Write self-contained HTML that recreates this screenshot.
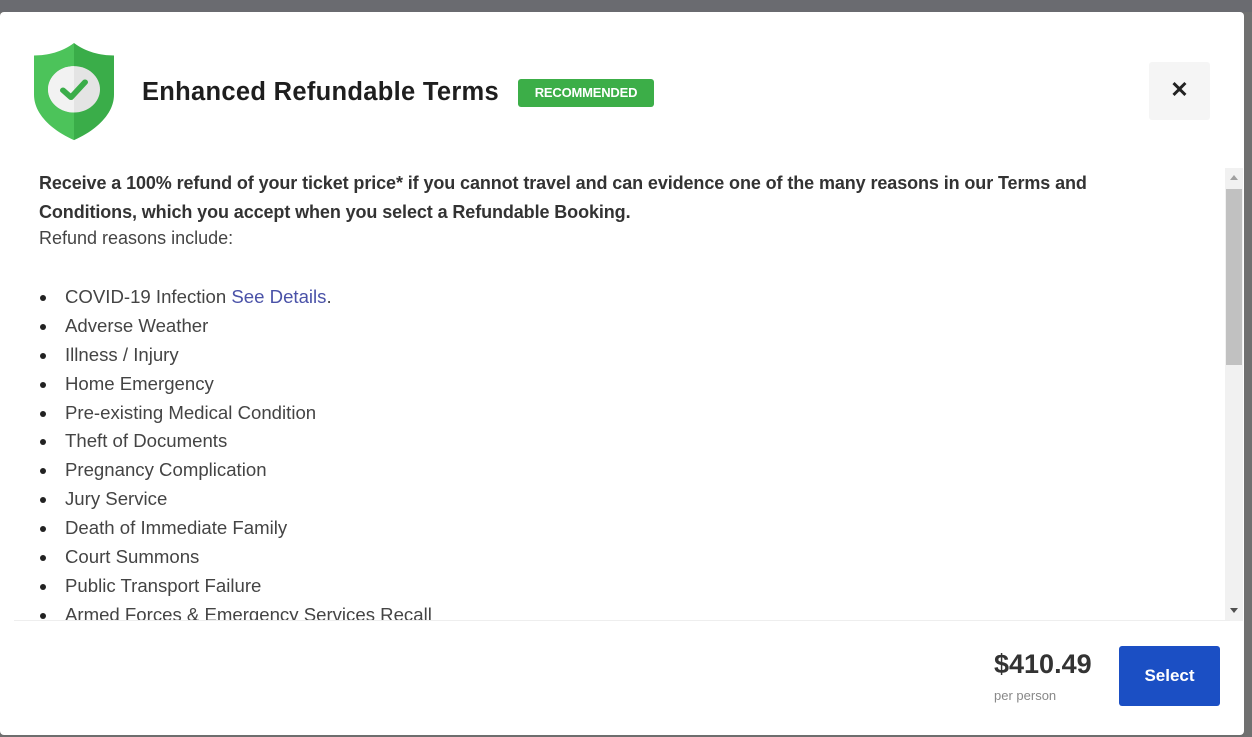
<!DOCTYPE html>
<html><head><meta charset="utf-8"><style>
*{margin:0;padding:0;box-sizing:border-box}
body{width:1252px;height:737px;background:#6e6e6e;font-family:"Liberation Sans",sans-serif;position:relative;overflow:hidden}
.topbar{position:absolute;left:0;top:0;width:1252px;height:12px;background:#6a6b70}
.modal{position:absolute;left:0;top:12px;width:1244px;height:723px;background:#fff;border-radius:4px;overflow:hidden}
.title{position:absolute;left:142px;top:66px;font-size:25.5px;font-weight:bold;color:#1e1e1e;letter-spacing:0.3px}
.badge{position:absolute;left:518px;top:67px;width:136px;height:28px;background:#3cae48;border-radius:3px;color:#fff;font-size:13px;font-weight:bold;line-height:28px;text-align:center;letter-spacing:-0.2px}
.close{position:absolute;left:1149px;top:50px;width:61px;height:58px;background:#f5f5f5;border-radius:3px;text-align:center;line-height:56px;font-size:22px;font-weight:bold;color:#222}
.content{position:absolute;left:0;top:156px;width:1224px;height:453px;overflow:hidden}
.p1{position:absolute;left:39px;top:1px;font-size:18px;font-weight:bold;color:#333;line-height:29px;width:1110px;letter-spacing:-0.1px}
.p2{position:absolute;left:39px;top:60px;font-size:18px;color:#444}
ul{position:absolute;left:39px;top:115px;list-style:none}
li{font-size:18.6px;color:#444;height:28.9px;line-height:28.9px;position:relative;padding-left:26px}
li:before{content:"";position:absolute;left:1px;top:12px;width:6px;height:6px;border-radius:50%;background:#222}
a{color:#4a52a8;text-decoration:none}
.sb{position:absolute;left:1225px;top:156px;width:18px;height:453px;background:#f1f1f1}
.thumb{position:absolute;left:1226px;top:177px;width:16px;height:176px;background:#c1c1c1}
.div{position:absolute;left:14px;top:608px;width:1216px;height:1px;background:#eee}
.price{position:absolute;left:994px;top:637px;font-size:27px;font-weight:bold;color:#333}
.pp{position:absolute;left:994px;top:676px;font-size:13px;color:#888}
.btn{position:absolute;left:1119px;top:634px;width:101px;height:60px;background:#1b4fc4;border-radius:3px;color:#fff;font-weight:bold;font-size:17px;text-align:center;line-height:60px}
.right{position:absolute;left:1244px;top:12px;width:8px;height:725px;background:#707070}
</style></head><body>
<div class="topbar"></div>
<div class="right"></div>
<div class="modal">
<svg style="position:absolute;left:32px;top:31px" width="84" height="98" viewBox="0 0 84 110" preserveAspectRatio="none">
<path d="M42 0 C30 10 16 14 2 14 L2 58 C2 80 20 98 42 109 Z" fill="#4cc35a"/>
<path d="M42 0 C54 10 68 14 82 14 L82 58 C82 80 64 98 42 109 Z" fill="#3aad49"/>
<circle cx="42" cy="52" r="26" fill="#e4e4e4"/>
<path d="M42 26 A26 26 0 0 0 42 78 Z" fill="#f2f2f2"/>
<path d="M31 53 L39 61 L53 44" stroke="#3aad49" stroke-width="6" fill="none" stroke-linecap="round" stroke-linejoin="round"/>
</svg>
<div class="title">Enhanced Refundable Terms</div>
<div class="badge">RECOMMENDED</div>
<div class="close">✕</div>
<div class="content">
<div class="p1">Receive a 100% refund of your ticket price* if you cannot travel and can evidence one of the many reasons in our Terms and Conditions, which you accept when you select a Refundable Booking.</div>
<div class="p2">Refund reasons include:</div>
<ul>
<li>COVID-19 Infection <a>See Details</a>.</li>
<li>Adverse Weather</li>
<li>Illness / Injury</li>
<li>Home Emergency</li>
<li>Pre-existing Medical Condition</li>
<li>Theft of Documents</li>
<li>Pregnancy Complication</li>
<li>Jury Service</li>
<li>Death of Immediate Family</li>
<li>Court Summons</li>
<li>Public Transport Failure</li>
<li>Armed Forces &amp; Emergency Services Recall</li>
</ul>
</div>
<div class="sb"></div><div class="thumb"></div>
<svg style="position:absolute;left:1229px;top:162px" width="10" height="8"><path d="M1 6 L5 1 L9 6Z" fill="#a0a0a0"/></svg>
<svg style="position:absolute;left:1229px;top:594px" width="10" height="8"><path d="M1 2 L5 7 L9 2Z" fill="#505050"/></svg>
<div class="div"></div>
<div class="price">$410.49</div>
<div class="pp">per person</div>
<div class="btn">Select</div>
</div>
</body></html>
